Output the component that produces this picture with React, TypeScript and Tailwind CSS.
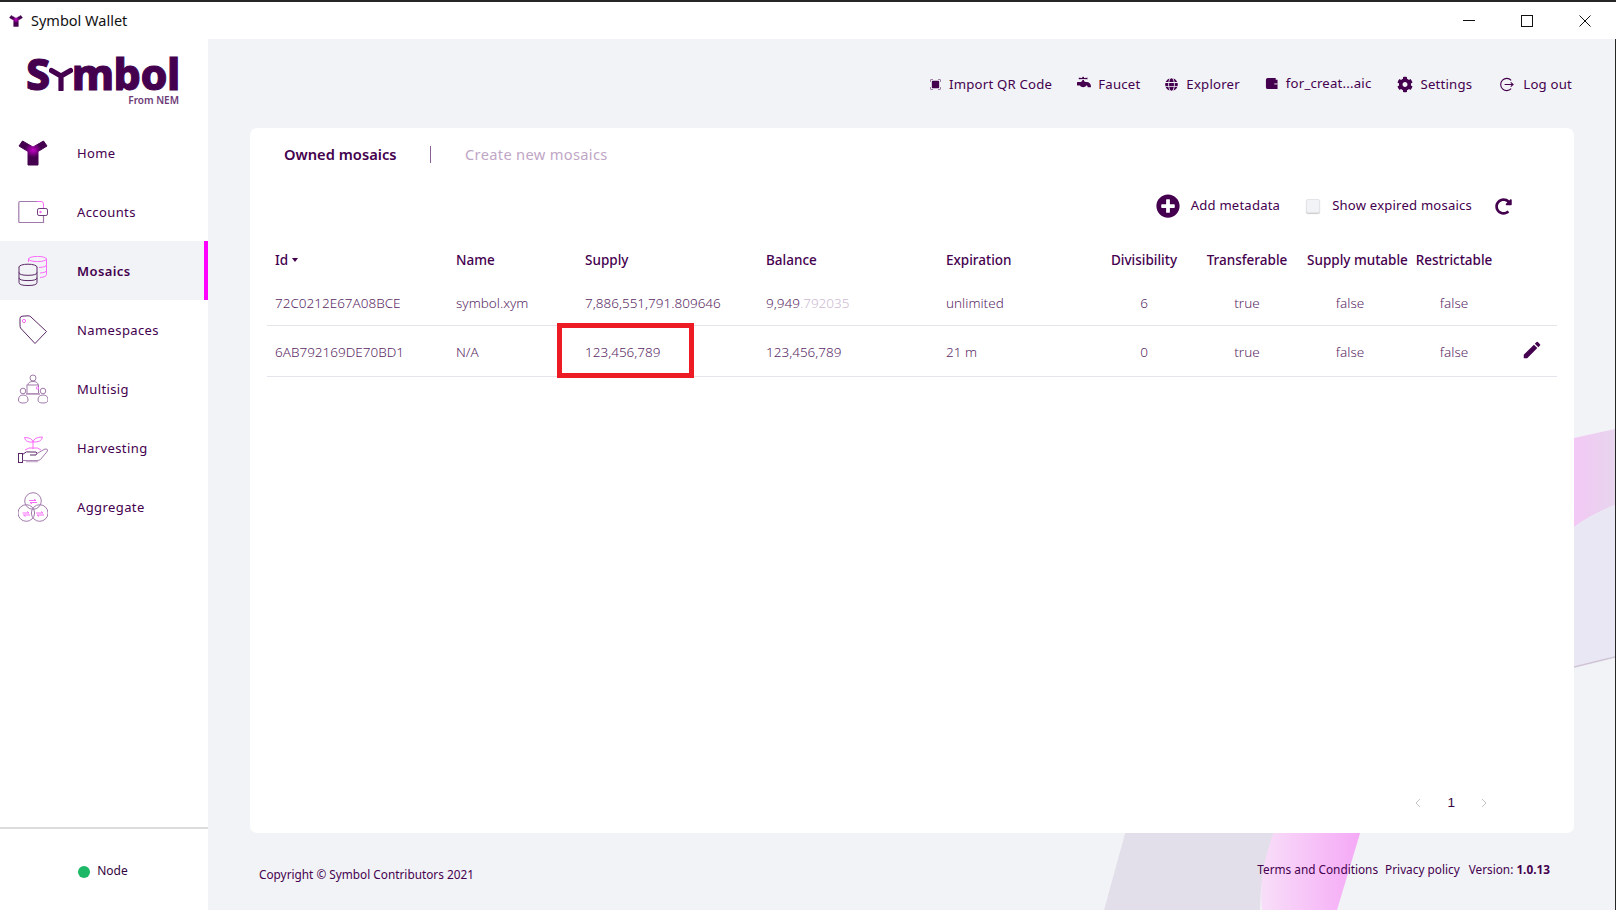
import React from "react";
import { FaCog, FaFaucet, FaGlobe, FaPlusCircle, FaRedoAlt } from "react-icons/fa";
import { MdEdit } from "react-icons/md";

const purple = "#44004e";
const line = "#a17aac";
const pink = "#f96cf9";

const YMark = ({ className }: { className?: string }) => (
  <svg viewBox="0 0 30 26" className={className}>
    <defs>
      <radialGradient id="ymark" cx="50%" cy="38%" r="30%">
        <stop offset="0%" stopColor="#c400c8" />
        <stop offset="100%" stopColor={purple} />
      </radialGradient>
    </defs>
    <path
      d="M4.5 1 L1 6 L10 11.5 V25 H20 V11.5 L29 6 L25.5 1 L15 7 Z"
      fill="url(#ymark)"
      stroke="url(#ymark)"
      strokeWidth="1"
      strokeLinejoin="round"
    />
  </svg>
);

const WalletIcon = () => (
  <svg viewBox="0 0 30 30" className="w-[30px] h-[30px]" fill="none" strokeWidth="1">
    <path d="M19 4.5 H23 Q25.5 4.5 25.5 7 V11.5" stroke={pink} />
    <path d="M25.5 18.5 V25.5 H1.5 Q0.8 25.5 0.8 24 V6 Q0.8 4.5 2 4.5 H19" stroke={line} strokeWidth="1.2" />
    <rect x="19.5" y="11.5" width="10" height="7" rx="1.6" stroke="#6d3a78" fill="#fff" />
    <circle cx="22.5" cy="15" r="1.2" fill={pink} />
  </svg>
);

const DbIcon = () => (
  <svg viewBox="0 0 30 30" className="w-[30px] h-[30px]" fill="none" strokeWidth="1">
    <g stroke={pink}>
      <ellipse cx="19.5" cy="3" rx="9" ry="2.6" />
      <path d="M10.5 3 V6 M28.5 3 V18.5 Q28.5 21 22 21.5 M28.5 9 Q28.5 11 21 11.5 M28.5 14.5 Q28.5 16.5 22 17" />
    </g>
    <g stroke="#5b2866" fill="#f2f3f7">
      <ellipse cx="10" cy="11" rx="9" ry="2.8" />
      <path d="M1 11 V26.5 Q1 29.5 10 29.5 Q19 29.5 19 26.5 V11" />
      <path d="M1 16.5 Q1 19.3 10 19.3 Q19 19.3 19 16.5" fill="none" />
      <path d="M1 21.8 Q1 24.6 10 24.6 Q19 24.6 19 21.8" fill="none" />
    </g>
  </svg>
);

const TagIcon = () => (
  <svg viewBox="0 0 30 30" className="w-[30px] h-[30px]" fill="none" strokeWidth="1">
    <path d="M2 9 V3.5 Q2 1.5 4 1.2 L10 0.8 Q12 0.8 13 2 L28.5 16.5 L17 28.5 L2.5 13 Q2 12 2 9 Z" stroke="#5b2866" />
    <circle cx="6" cy="6" r="1.6" stroke={pink} />
  </svg>
);

const MultisigIcon = () => (
  <svg viewBox="0 0 30 30" className="w-[30px] h-[30px]" fill="none" strokeWidth="1" stroke={line}>
    <circle cx="15" cy="4" r="3" />
    <path d="M10 11 Q10 7.5 15 7.5 Q20 7.5 20 11" />
    <rect x="9" y="11" width="11.5" height="8.5" fill="#fff" />
    <path d="M8 20 H22" stroke="#b798bf" strokeWidth="1.6" />
    <circle cx="5" cy="17" r="2.8" fill="#fff" />
    <path d="M0.5 26 Q0.5 21 5 21 Q10 21 10 26 Q10 29 5 29 Q0.5 29 0.5 26 Z" fill="#fff" />
    <circle cx="25" cy="17" r="2.8" fill="#fff" />
    <path d="M20 26 Q20 21 25 21 Q30 21 30 26 Q30 29 25 29 Q20 29 20 26 Z" fill="#fff" />
    <circle cx="19.5" cy="14" r="1.2" stroke={pink} />
  </svg>
);

const HarvestIcon = () => (
  <svg viewBox="0 0 30 30" className="w-[30px] h-[30px]" fill="none" strokeWidth="1">
    <g stroke={pink}>
      <path d="M15 16 V9 M15 9 Q14 4.5 6.5 4.5 Q7.5 10 15 9 M15 9 Q16 4 24.5 4 Q23.5 9.5 15 9" />
      <path d="M7 17 Q11 14 15 15 Q20 14 23 17" />
    </g>
    <g stroke="#5b2866">
      <rect x="0.5" y="20.5" width="4" height="9" />
      <path d="M4.5 21.5 Q8 17.5 13 19 H18 Q20 20 18 22 H12" />
    </g>
    <path d="M18 21 L27 16 Q30 15.5 29.5 18 L22.5 26.5 Q21 27.5 19 27.5 H4.5" stroke={line} />
    <path d="M8 28.5 H20" stroke="#c9b3ce" strokeWidth="1.6" />
  </svg>
);

const AggregateIcon = () => (
  <svg viewBox="0 0 30 30" className="w-[30px] h-[30px]" fill="none" strokeWidth="1">
    <g stroke={line}>
      <circle cx="15" cy="9" r="8.3" />
      <circle cx="8.3" cy="21" r="8.3" />
      <circle cx="21.7" cy="21" r="8.3" />
    </g>
    <g stroke={pink}>
      <path d="M11 8.5 H18 L16 7 M19 10.5 H12 L14 12" />
      <path d="M4.5 21 H11 L9 19.5 M12 23 H5.5 L7.5 24.5" />
      <path d="M18 21 H25 L23 19.5 M26 23 H19 L21 24.5" />
    </g>
  </svg>
);

const navItems = [
  { label: "Home", icon: <YMark className="w-[30px] h-[26px]" /> },
  { label: "Accounts", icon: <WalletIcon /> },
  { label: "Mosaics", icon: <DbIcon />, active: true },
  { label: "Namespaces", icon: <TagIcon /> },
  { label: "Multisig", icon: <MultisigIcon /> },
  { label: "Harvesting", icon: <HarvestIcon /> },
  { label: "Aggregate", icon: <AggregateIcon /> },
];

const Sidebar = () => (
  <aside className="w-[208px] shrink-0 bg-white flex flex-col text-[#44004e]">
    <div className="h-[84px] pl-[26px] pt-[14px]">
      <div className="flex items-center h-[42px] text-[43px] leading-[42px] font-extrabold tracking-[-0.5px] [-webkit-text-stroke:1px_#44004e]">
        <span>S</span>
        <svg viewBox="0 0 30 30" className="w-[24px] h-[25px] mt-[9px] -mx-[1px]">
          <path d="M3 5 L15 12 L27 5 M15 12 V29" stroke={purple} strokeWidth="6.5" fill="none" strokeLinecap="round" strokeLinejoin="round" />
        </svg>
        <span>mbol</span>
      </div>
      <div className="w-[153px] -mt-[1px] text-right text-[10px] leading-[12px] font-semibold text-[#6d3a78]">From NEM</div>
    </div>
    <nav className="flex-1">
      {navItems.map((item) => (
        <div
          key={item.label}
          className={
            item.active
              ? "h-[59px] flex items-center pl-[18px] bg-[#f2f3f7] border-r-4 border-[#ff00ff] font-semibold"
              : "h-[59px] flex items-center pl-[18px]"
          }
        >
          <span className="w-[30px] flex justify-center shrink-0">{item.icon}</span>
          <span className="ml-[29px] mt-[2px] text-[13px] tracking-[0.4px]">{item.label}</span>
        </div>
      ))}
    </nav>
    <div className="h-[83px] border-t-2 border-[#dcdcdc] flex items-center justify-center pr-[2px] pt-[4px]">
      <span className="w-[12px] h-[12px] rounded-full bg-[#1cb866]" />
      <span className="ml-[7px] text-[12px] text-[#33053d] -mt-[1px]">Node</span>
    </div>
  </aside>
);

const HeaderIcon = ({ children }: { children: React.ReactNode }) => (
  <span className="w-[16px] h-[16px] flex items-center justify-center text-[#44004e]">{children}</span>
);

const Header = () => (
  <header className="relative h-[89px] flex items-center justify-end pr-[43px] pt-[2px] gap-[24px] text-[13.2px] tracking-[0.2px] text-[#44004e]">
    <div className="flex items-center gap-[6px]">
      <HeaderIcon>
        <svg viewBox="0 0 12 12" className="w-[11px] h-[11px]">
          <rect x="2" y="2" width="8" height="8" rx="1" fill={purple} />
          <path d="M0.5 3 V1.5 Q0.5 0.5 1.5 0.5 H3 M9 0.5 H10.5 Q11.5 0.5 11.5 1.5 V3 M0.5 9 V10.5 Q0.5 11.5 1.5 11.5 H3 M9 11.5 H10.5 Q11.5 11.5 11.5 10.5 V9" stroke="#7b4c86" fill="none" />
        </svg>
      </HeaderIcon>
      <span>Import QR Code</span>
    </div>
    <div className="flex items-center gap-[6px]">
      <HeaderIcon>
        <FaFaucet className="w-[14px] h-[14px] -mt-[5px]" />
      </HeaderIcon>
      <span>Faucet</span>
    </div>
    <div className="flex items-center gap-[7px] -ml-[1px]">
      <HeaderIcon>
        <FaGlobe className="w-[13px] h-[13px]" />
      </HeaderIcon>
      <span>Explorer</span>
    </div>
    <div className="flex items-center gap-[6px] -mt-[2px]">
      <HeaderIcon>
        <svg viewBox="0 0 14 14" className="w-[13px] h-[13px]">
          <path d="M1 3 Q1 1 3 1 H11.5 V3 H13.5 V13 H3 Q1 13 1 11 Z" fill={purple} />
          <path d="M10 7.5 H13.5" stroke="#fff" strokeWidth="1" />
        </svg>
      </HeaderIcon>
      <span>for_creat...aic</span>
    </div>
    <div className="flex items-center gap-[8px] ml-[1px]">
      <HeaderIcon>
        <FaCog className="w-[17px] h-[17px]" />
      </HeaderIcon>
      <span>Settings</span>
    </div>
    <div className="flex items-center gap-[9px] ml-[2px]">
      <HeaderIcon>
        <svg viewBox="0 0 16 16" className="w-[15px] h-[15px]" fill="none" stroke={purple} strokeWidth="1.2">
          <path d="M13 3.5 A6.5 6.5 0 1 0 13 12.5" />
          <path d="M6 8 H15 M12.5 5.8 L15 8 L12.5 10.2" />
        </svg>
      </HeaderIcon>
      <span>Log out</span>
    </div>
  </header>
);

const cols = "grid grid-cols-[181px_129px_181px_180px_154px_104px_102px_104px_104px_51px] items-center";

const Row = ({ cells, edit, tall }: { cells: React.ReactNode[]; edit?: boolean; tall?: boolean }) => (
  <div className={`${cols} ${tall ? "h-[51px] pt-[2px]" : "h-[48px] pt-[3px]"} border-b border-[#e6e3ea] text-[13.5px] font-light text-[#5a2a65]`}>
    {cells.map((c, i) => (
      <div key={i} className={i < 5 ? "pl-[8px]" : "text-center"}>
        {c}
      </div>
    ))}
    <div className="flex justify-center -mt-[5px]">{edit && <MdEdit className="w-[22px] h-[22px] text-[#44004e]" />}</div>
  </div>
);

const Card = () => (
  <section className="relative ml-[42px] w-[1324px] h-[705px] bg-white rounded-[7px] flex flex-col text-[#44004e]">
    <div className="h-[52px] pl-[34px] flex items-center text-[14.7px]">
      <span className="font-semibold w-[146px]">Owned mosaics</span>
      <span className="w-px h-[17px] bg-[#8a5f94]" />
      <span className="ml-[34px] text-[#bfa6c6] tracking-[0.3px]">Create new mosaics</span>
    </div>
    <div className="h-[50px] pt-[2px] flex items-center justify-end pr-[62px] text-[13.1px] tracking-[0.2px]">
      <FaPlusCircle className="w-[24px] h-[24px]" />
      <span className="ml-[11px]">Add metadata</span>
      <span className="ml-[26px] w-[14px] h-[14px] rounded-[2px] bg-[#f2f3f7] border border-[#e4e4e8] shadow-[0_1px_1px_#ccc]" />
      <span className="ml-[12px] -mt-[1px]">Show expired mosaics</span>
      <FaRedoAlt className="ml-[23px] w-[17px] h-[17px]" />
    </div>
    <div className="mx-[17px] mt-[10px] relative">
      <div className={`${cols} h-[38px] pt-[2px] text-[13.5px] font-medium`}>
        <div className="pl-[8px] flex items-center">
          Id
          <svg viewBox="0 0 6 4" className="w-[6px] h-[4px] ml-[4px]">
            <path d="M0 0 H6 L3 4 Z" fill={purple} />
          </svg>
        </div>
        <div className="pl-[8px]">Name</div>
        <div className="pl-[8px]">Supply</div>
        <div className="pl-[8px]">Balance</div>
        <div className="pl-[8px]">Expiration</div>
        <div className="text-center">Divisibility</div>
        <div className="text-center">Transferable</div>
        <div className="text-center whitespace-nowrap pl-[9px]">Supply mutable</div>
        <div className="text-center">Restrictable</div>
        <div />
      </div>
      <Row
        cells={[
          "72C0212E67A08BCE",
          "symbol.xym",
          "7,886,551,791.809646",
          <span>
            9,949<span className="text-[#cdb9d2]">.792035</span>
          </span>,
          "unlimited",
          "6",
          "true",
          "false",
          "false",
        ]}
      />
      <Row
        edit
        tall
        cells={["6AB792169DE70BD1", "N/A", "123,456,789", "123,456,789", "21 m", "0", "true", "false", "false"]}
      />
      <div className="absolute left-[290px] top-[83px] w-[137px] h-[55px] border-[5px] border-[#ed1c24]" />
    </div>
    <div className="mt-auto h-[60px] flex items-center justify-end gap-[26px] pr-[87px] text-[13.5px] font-['Liberation_Sans',sans-serif]">
      <svg viewBox="0 0 6 10" className="w-[6px] h-[10px]" fill="none" stroke="#c4c4c4">
        <path d="M5 1 L1 5 L5 9" />
      </svg>
      <span className="text-[#33053d]">1</span>
      <svg viewBox="0 0 6 10" className="w-[6px] h-[10px]" fill="none" stroke="#c4c4c4">
        <path d="M1 1 L5 5 L1 9" />
      </svg>
    </div>
  </section>
);

const Footer = () => (
  <footer className="relative flex justify-between pl-[51px] pr-[65px] text-[11.8px] text-[#44004e] flex-1">
    <span className="mt-[33px]">Copyright © Symbol Contributors 2021</span>
    <div className="mt-[28px] flex h-[18px] items-center">
      <span>Terms and Conditions</span>
      <span className="ml-[7px]">Privacy policy</span>
      <span className="ml-[9px]">
        Version: <span className="font-bold">1.0.13</span>
      </span>
    </div>
  </footer>
);

const Decoration = () => (
  <svg viewBox="208 39 1407 871" className="absolute inset-0 w-full h-full">
    <defs>
      <linearGradient id="pinkA" x1="0" y1="0" x2="1" y2="0">
        <stop offset="0%" stopColor="#f8def9" />
        <stop offset="100%" stopColor="#f5a8f6" />
      </linearGradient>
      <linearGradient id="pinkB" x1="0" y1="0" x2="1" y2="0">
        <stop offset="0%" stopColor="#f3c8f5" />
        <stop offset="100%" stopColor="#e7d5ee" />
      </linearGradient>
    </defs>
    <path d="M1126 830 H1275 Q1260 870 1260 910 H1104 Z" fill="#e3dfea" />
    <path d="M1275 830 H1361 L1337 910 H1262 Q1258 870 1275 830 Z" fill="url(#pinkA)" />
    <path d="M1574 438 L1615 429 V505 Q1590 515 1574 527 Z" fill="url(#pinkB)" />
    <path d="M1574 527 Q1590 515 1615 505 V657 L1574 666 Z" fill="#eae7f4" />
    <path d="M1574 667 L1615 657" stroke="#cfc3d6" strokeWidth="1.5" />
  </svg>
);

export default function App() {
  return (
    <div className="w-[1616px] h-[910px] flex flex-col overflow-hidden bg-white font-['Noto_Sans',sans-serif]">
      <div className="h-[2px] bg-[#262626] shrink-0" />
      <div className="h-[37px] shrink-0 flex items-center pl-[9px] text-[14.5px] text-[#111]">
        <YMark className="w-[14px] h-[12px]" />
        <span className="ml-[8px]">Symbol Wallet</span>
        <svg viewBox="0 0 128 16" className="ml-auto w-[128px] h-[16px] mr-[25px]" stroke="#111" fill="none">
          <path d="M0 7.5 H12" />
          <rect x="58.5" y="2.5" width="11" height="11" />
          <path d="M116.5 2.5 L127.5 13.5 M127.5 2.5 L116.5 13.5" />
        </svg>
      </div>
      <div className="flex flex-1 min-h-0">
        <Sidebar />
        <main className="relative flex-1 flex flex-col bg-[#f2f3f7]">
          <Decoration />
          <Header />
          <Card />
          <Footer />
        </main>
        <div className="w-px bg-[#262626] shrink-0" />
      </div>
    </div>
  );
}
